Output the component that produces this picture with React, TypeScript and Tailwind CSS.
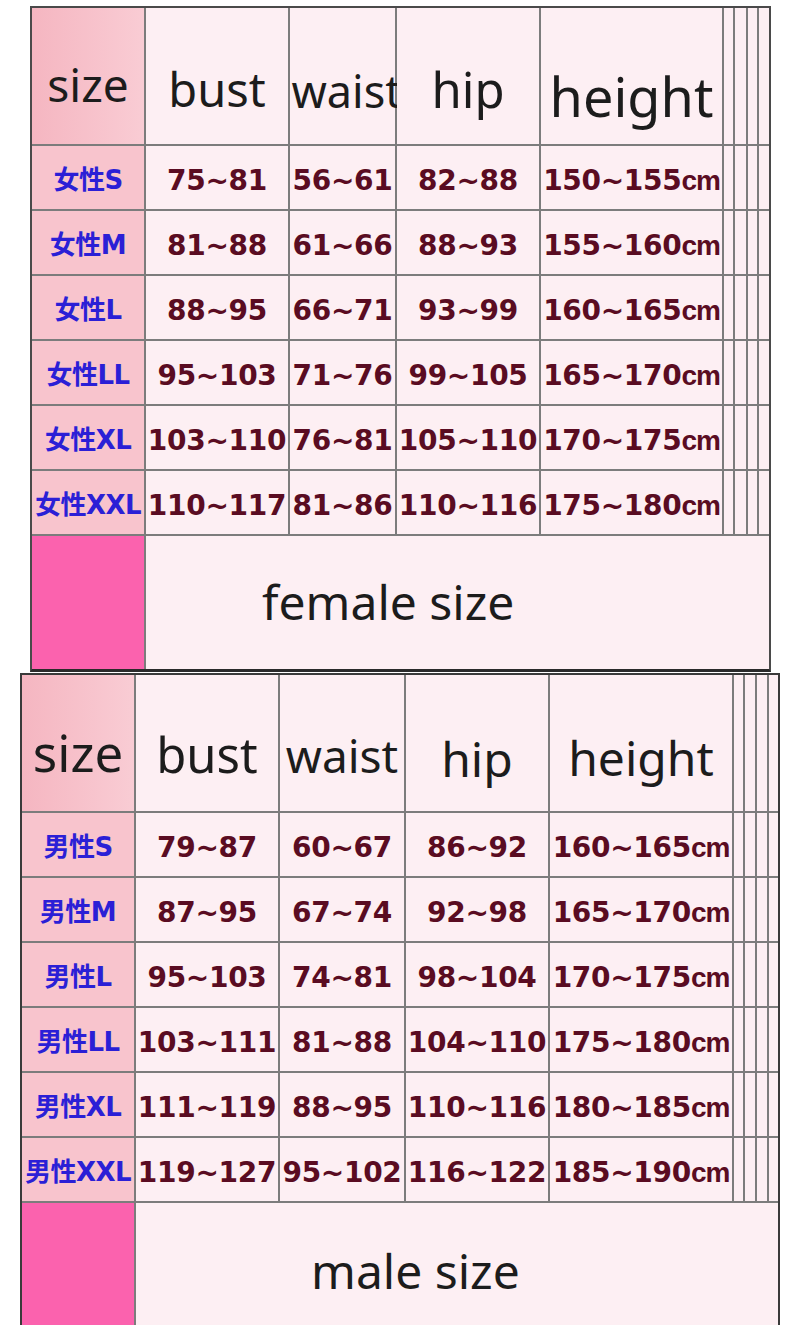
import React from "react";

type Row = [string, string, string, string, string];

const female: Row[] = [
  ["女性S", "75~81", "56~61", "82~88", "150~155"],
  ["女性M", "81~88", "61~66", "88~93", "155~160"],
  ["女性L", "88~95", "66~71", "93~99", "160~165"],
  ["女性LL", "95~103", "71~76", "99~105", "165~170"],
  ["女性XL", "103~110", "76~81", "105~110", "170~175"],
  ["女性XXL", "110~117", "81~86", "110~116", "175~180"],
];

const male: Row[] = [
  ["男性S", "79~87", "60~67", "86~92", "160~165"],
  ["男性M", "87~95", "67~74", "92~98", "165~170"],
  ["男性L", "95~103", "74~81", "98~104", "170~175"],
  ["男性LL", "103~111", "81~88", "104~110", "175~180"],
  ["男性XL", "111~119", "88~95", "110~116", "180~185"],
  ["男性XXL", "119~127", "95~102", "116~122", "185~190"],
];

const head = "font-['Noto_Sans',sans-serif] text-[#1c1c1c] leading-none flex items-end justify-center whitespace-nowrap";
const label =
  "bg-[#f8c4cd] flex items-center justify-center pt-[5px] whitespace-nowrap font-bold text-[26px] text-[#2b1fd6] font-['DejaVu_Sans','Noto_Sans_CJK_SC',sans-serif] tracking-[-0.5px]";
const cell =
  "bg-[#fdeff3] flex items-center justify-center pt-[6px] whitespace-nowrap font-bold text-[28px] text-[#5a0c22] font-['DejaVu_Sans',sans-serif] tracking-[-0.3px]";
const thin = "bg-[#fdeff3]";

function DataRows({ rows }: { rows: Row[] }) {
  return (
    <>
      {rows.map((r) => (
        <React.Fragment key={r[0]}>
          <div className={label}>{r[0]}</div>
          <div className={cell}>{r[1]}</div>
          <div className={cell}>{r[2]}</div>
          <div className={cell}>{r[3]}</div>
          <div className={cell}>
            {r[4]}
            <span className="font-['Liberation_Sans',sans-serif] tracking-[-1px]">cm</span>
          </div>
          <div className={thin} />
          <div className={thin} />
          <div className={thin} />
          <div className={thin} />
        </React.Fragment>
      ))}
    </>
  );
}

export default function App() {
  return (
    <div className="w-[800px] h-[1325px] bg-white overflow-hidden">
      {/* female table */}
      <div className="ml-[30px] mt-[6px] w-[741px] grid grid-cols-[112px_142px_105px_142px_181px_9px_11px_9px_10px] grid-rows-[136px_repeat(6,63px)_133px] gap-[2px] bg-[#7c7c7c] border-2 border-[#4a4a4a] border-b-[3px] border-b-[#2a2a2a]">
        <div className={`${head} bg-gradient-to-r from-[#f5b6c1] to-[#f9ccd4] text-[46px] pb-[37px]`}>size</div>
        <div className={`${head} bg-[#fdeff3] text-[47px] pb-[31px]`}>bust</div>
        <div className={`${head} bg-[#fdeff3] text-[45px] pb-[31px] pl-[8px]`}>waist</div>
        <div className={`${head} bg-[#fdeff3] text-[49px] pb-[30px]`}>hip</div>
        <div className={`${head} bg-[#fdeff3] text-[54px] pb-[21px]`}>height</div>
        <div className={thin} />
        <div className={thin} />
        <div className={thin} />
        <div className={thin} />
        <DataRows rows={female} />
        <div className="bg-[#fb62ae]" />
        <div className={`${head} col-span-8 bg-[#fdeff3] justify-start text-[48px] pl-[116px] pb-[43px]`}>
          female size
        </div>
      </div>

      {/* male table */}
      <div className="ml-[20px] mt-[1px] w-[760px] grid grid-cols-[112px_142px_124px_142px_182px_9px_10px_10px_9px] grid-rows-[136px_repeat(6,63px)_122px] gap-[2px] bg-[#7c7c7c] border-2 border-b-0 border-[#3a3a3a]">
        <div className={`${head} bg-gradient-to-r from-[#f5b6c1] to-[#f9ccd4] text-[51px] pb-[33px]`}>size</div>
        <div className={`${head} bg-[#fdeff3] text-[49px] pb-[32px]`}>bust</div>
        <div className={`${head} bg-[#fdeff3] text-[46px] pb-[33px]`}>waist</div>
        <div className={`${head} bg-[#fdeff3] text-[48px] pb-[28px]`}>hip</div>
        <div className={`${head} bg-[#fdeff3] text-[48px] pb-[29px]`}>height</div>
        <div className={thin} />
        <div className={thin} />
        <div className={thin} />
        <div className={thin} />
        <DataRows rows={male} />
        <div className="bg-[#fb62ae]" />
        <div className={`${head} col-span-8 bg-[#fdeff3] justify-start text-[48px] pl-[175px] pb-[30px]`}>
          male size
        </div>
      </div>
    </div>
  );
}
